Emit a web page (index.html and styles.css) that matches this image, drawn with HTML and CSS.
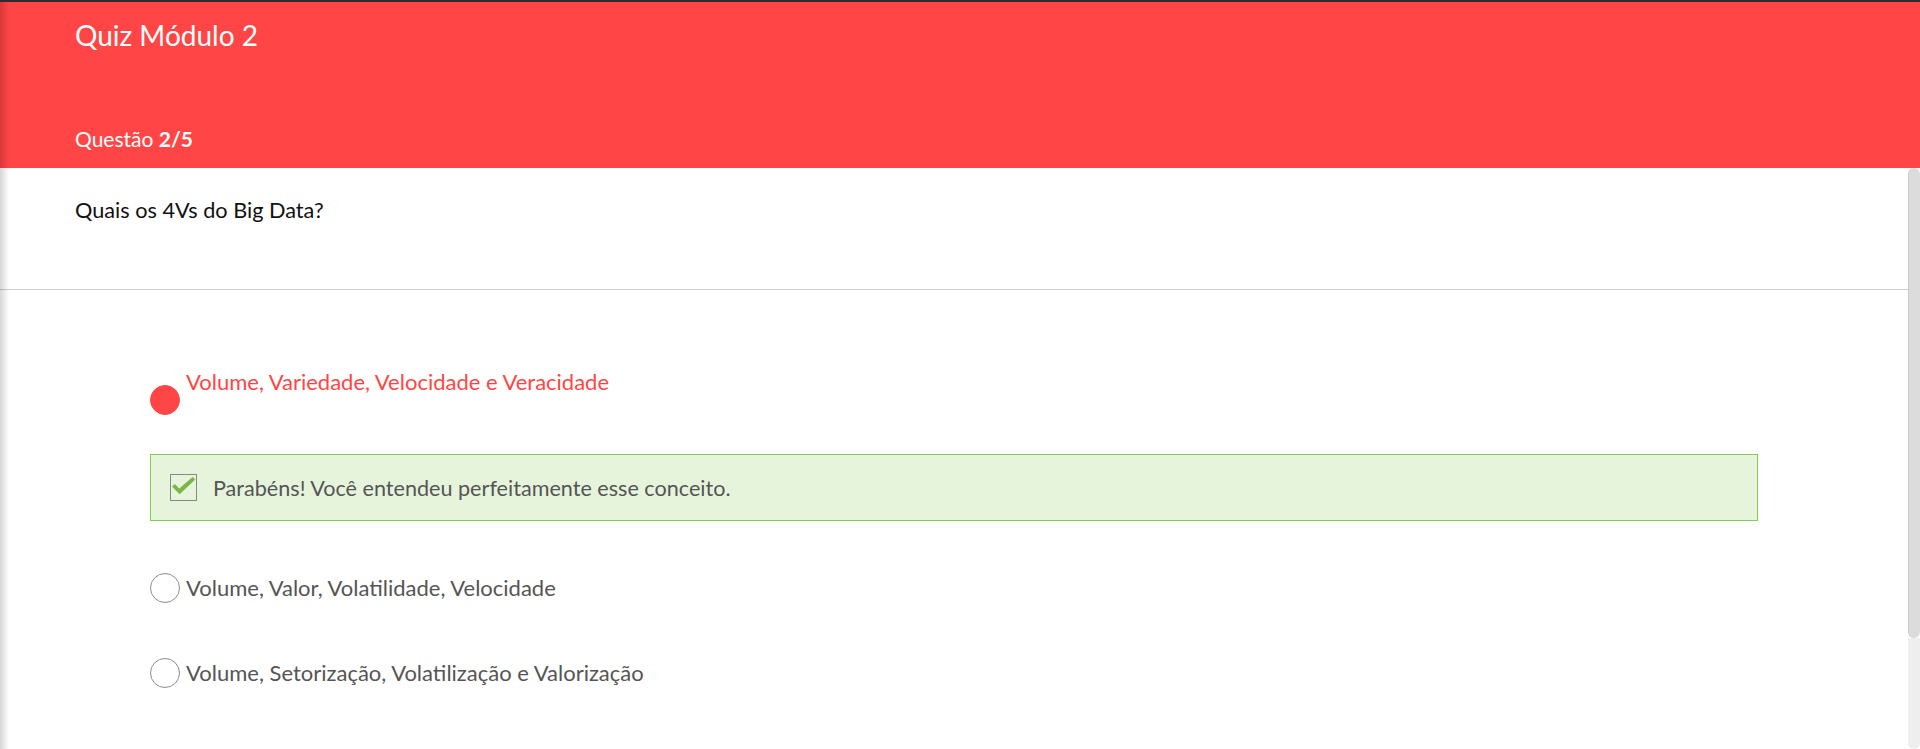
FILE: index.html
```html
<!DOCTYPE html>
<html lang="pt-BR">
<head>
<meta charset="utf-8">
<title>Quiz Módulo 2</title>
<link rel="stylesheet" href="styles.css">
</head>
<body>
<div class="topline"></div>
<div class="page">
  <header class="quiz-header">
    <h1 class="quiz-title">Quiz Módulo 2</h1>
    <div class="quiz-progress">Questão <b>2/5</b></div>
  </header>
  <div class="body-row">
    <main class="content">
      <section class="question">
        <p class="question-text">Quais os 4Vs do Big Data?</p>
      </section>
      <section class="options">
        <div class="option option-selected">
          <span class="radio radio-on"></span>
          <span class="option-label">Volume, Variedade, Velocidade e Veracidade</span>
        </div>
        <div class="feedback">
          <span class="checkbox">
            <svg viewBox="1 1 25 25" width="25" height="25"><path d="M2 12.5 L4.8 10 L9.3 14.6 L22.6 3 L25.3 5.6 L9.6 20.2 Z" fill="#7ab648"/></svg>
          </span>
          <span class="feedback-text">Parabéns! Você entendeu perfeitamente esse conceito.</span>
        </div>
        <div class="option option-plain">
          <span class="radio"></span>
          <span class="option-label">Volume, Valor, Volatilidade, Velocidade</span>
        </div>
        <div class="option option-plain option-last">
          <span class="radio"></span>
          <span class="option-label">Volume, Setorização, Volatilização e Valorização</span>
        </div>
      </section>
    </main>
    <div class="scrollbar"><div class="thumb"></div><div class="track"></div></div>
  </div>
</div>
<div class="edge-shadow"></div>
</body>
</html>
```
FILE: styles.css
```css
* { box-sizing: border-box; }
html, body { margin: 0; padding: 0; height: 100%; }
body {
  font-family: Lato, "Open Sans", "Liberation Sans", sans-serif;
  background: #fff;
  overflow: hidden;
}
.topline { height: 2px; background: #2e2e2e; }
.page { display: flex; flex-direction: column; height: calc(100% - 2px); }
.quiz-header {
  height: 166px;
  background: #ff4545;
  color: #fff;
  padding: 17px 75px 0;
}
.quiz-title {
  margin: 0;
  font-size: 28px;
  font-weight: 400;
  line-height: 1.2;
}
.quiz-progress {
  margin-top: 74px;
  font-size: 21px;
  line-height: 24px;
}
.quiz-progress b { font-weight: 700; }
.body-row { flex: 1; display: flex; }
.content { flex: 1; }
.question {
  height: 122px;
  border-bottom: 1px solid #cfcfcf;
  padding: 30px 75px 0;
}
.question-text {
  margin: 0;
  font-size: 21.7px;
  line-height: 24px;
  color: #111;
}
.options { padding: 80px 150px 0; }
.option { display: flex; gap: 6px; }
.option-selected { align-items: flex-start; }
.option-selected .radio { margin-top: 15px; }
.option-selected .option-label { color: #ff4545; }
.option-plain { align-items: center; margin-top: 52px; }
.option-last { margin-top: 55px; }
.option-label { font-size: 22px; line-height: 24px; color: #555; }
.radio {
  width: 30px; height: 30px; flex: none;
  border-radius: 50%;
  border: 1px solid #8c8c8c;
  background: #fff;
}
.radio-on { background: #ff4545; border-color: #ff4545; }
.feedback {
  margin-top: 39px;
  height: 67px;
  display: flex;
  align-items: center;
  gap: 16px;
  padding-left: 19px;
  background: #e6f4dc;
  border: 1px solid #80cc56;
}
.checkbox {
  width: 27px; height: 27px; flex: none;
  border: 1px solid #888;
  display: flex; align-items: center; justify-content: center;
}
.checkbox svg { overflow: visible; }
.feedback-text { font-size: 21.6px; line-height: 24px; color: #555; }
.scrollbar { width: 12px; display: flex; flex-direction: column; }
.thumb {
  height: 470px;
  background: #dcdcdc;
  border-left: 1px solid #cacaca;
  border-radius: 6px;
}
.track { flex: 1; background: #eeeeee; border-radius: 0 0 6px 6px; }
.edge-shadow {
  position: fixed; left: 0; top: 2px; bottom: 0; width: 9px;
  background: linear-gradient(to right, rgba(0,0,0,0.16), rgba(0,0,0,0));
  pointer-events: none;
}
```
